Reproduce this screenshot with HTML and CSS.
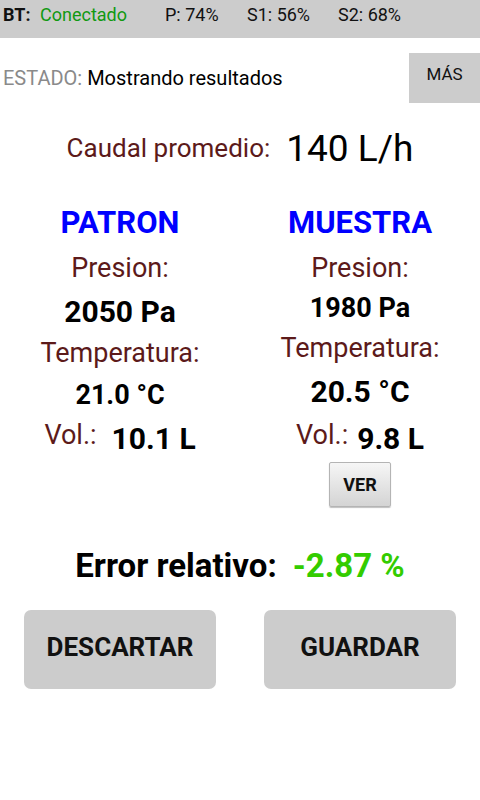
FILE: index.html
```html
<!DOCTYPE html>
<html lang="es">
<head>
<meta charset="utf-8">
<title>Resultados</title>
<link rel="stylesheet" href="styles.css">
</head>
<body>
<div class="topbar">
  <span class="bt">BT:</span>
  <span class="conn">Conectado</span>
  <span class="stat stat-p">P: 74%</span>
  <span class="stat stat-s1">S1: 56%</span>
  <span class="stat stat-s2">S2: 68%</span>
</div>
<div class="status-row">
  <div class="status"><span class="status-label">ESTADO:</span> <span class="status-value">Mostrando resultados</span></div>
  <div class="more-btn">MÁS</div>
</div>
<div class="flow-row">
  <span class="label flow-label">Caudal promedio:</span>
  <span class="flow-value">140 L/h</span>
</div>
<div class="columns">
  <div class="col col-left">
    <div class="title">PATRON</div>
    <div class="label l-pres">Presion:</div>
    <div class="value v-pres">2050 Pa</div>
    <div class="label l-temp">Temperatura:</div>
    <div class="value v-temp">21.0 °C</div>
    <div class="vol-row">
      <span class="label">Vol.:</span>
      <span class="value">10.1 L</span>
    </div>
  </div>
  <div class="col col-right">
    <div class="title">MUESTRA</div>
    <div class="label l-pres">Presion:</div>
    <div class="value v-pres">1980 Pa</div>
    <div class="label l-temp">Temperatura:</div>
    <div class="value v-temp">20.5 °C</div>
    <div class="vol-row">
      <span class="label">Vol.:</span>
      <span class="value">9.8 L</span>
    </div>
    <div class="ver-btn">VER</div>
  </div>
</div>
<div class="error-row">
  <span class="error-label">Error relativo:</span>
  <span class="error-value">-2.87 %</span>
</div>
<div class="actions">
  <div class="action-btn">DESCARTAR</div>
  <div class="action-btn">GUARDAR</div>
</div>
</body>
</html>
```
FILE: styles.css
```css
html, body {
  margin: 0;
  padding: 0;
  background: #ffffff;
}
body {
  width: 480px;
  height: 800px;
  font-family: Roboto, "Liberation Sans", sans-serif;
  color: #000;
}

/* top bar */
.topbar {
  height: 38px;
  background: #cccccc;
  display: flex;
  align-items: flex-start;
  font-size: 18px;
  line-height: 30px;
  padding-left: 3px;
  box-sizing: border-box;
  color: #111;
}
.bt { font-weight: bold; width: 37px; }
.conn { color: #119911; width: 125px; }
.stat-p { width: 82px; }
.stat-s1 { width: 91px; }

/* status */
.status-row {
  margin-top: 15px;
  height: 50px;
  display: flex;
  align-items: center;
}
.status {
  padding-left: 3px;
  font-size: 20px;
  flex: 1;
}
.status-label { color: #8a8a8a; }
.more-btn {
  width: 71px;
  height: 50px;
  background: #cccccc;
  font-size: 17px;
  line-height: 43px;
  text-align: center;
  color: #111;
}

/* flow */
.flow-row {
  margin-top: 20px;
  height: 50px;
  display: flex;
  justify-content: center;
  align-items: center;
  gap: 16px;
}
.label { color: #5c1a1a; font-size: 27px; }
.flow-label { font-size: 26px; }
.flow-value { font-size: 37px; }

/* columns */
.columns {
  margin-top: 27px;
  display: grid;
  grid-template-columns: 240px 240px;
}
.col {
  display: flex;
  flex-direction: column;
  align-items: center;
  text-align: center;
}
.title {
  color: #0000ff;
  font-weight: bold;
  font-size: 31px;
  line-height: 46px;
}
.value { font-weight: bold; font-size: 30px; }
.l-pres { line-height: 44px; }
.col-left .v-pres { line-height: 44px; }
.col-left .l-temp { line-height: 38px; }
.col-left .v-temp { font-size: 27px; line-height: 46px; }
.col-right .v-pres { font-size: 27px; line-height: 36px; }
.col-right .l-temp { line-height: 44px; }
.col-right .v-temp { line-height: 44px; }
.vol-row {
  display: flex;
  align-items: center;
  height: 40px;
  gap: 15px;
}
.col-right .vol-row { height: 48px; gap: 9px; }
.vol-row .label { position: relative; top: -3px; }

.ver-btn {
  width: 62px;
  height: 45px;
  box-sizing: border-box;
  border: 1px solid #b4b4b4;
  border-radius: 2px;
  background: linear-gradient(#f6f6f6, #d4d4d4);
  box-shadow: 0 1px 1px rgba(0,0,0,0.25);
  font-weight: bold;
  font-size: 18px;
  line-height: 43px;
  text-align: center;
  color: #111;
}

/* error */
.error-row {
  margin-top: 36px;
  height: 44px;
  display: flex;
  justify-content: center;
  align-items: center;
  gap: 16px;
  font-weight: bold;
  font-size: 33px;
}
.error-value { color: #33cc00; }

/* actions */
.actions {
  margin-top: 23px;
  padding: 0 24px;
  display: flex;
  gap: 48px;
}
.action-btn {
  flex: 1;
  height: 79px;
  box-sizing: border-box;
  padding-bottom: 5px;
  background: #cccccc;
  border-radius: 7px;
  display: flex;
  align-items: center;
  justify-content: center;
  font-weight: bold;
  font-size: 26px;
  color: #111;
}
```
